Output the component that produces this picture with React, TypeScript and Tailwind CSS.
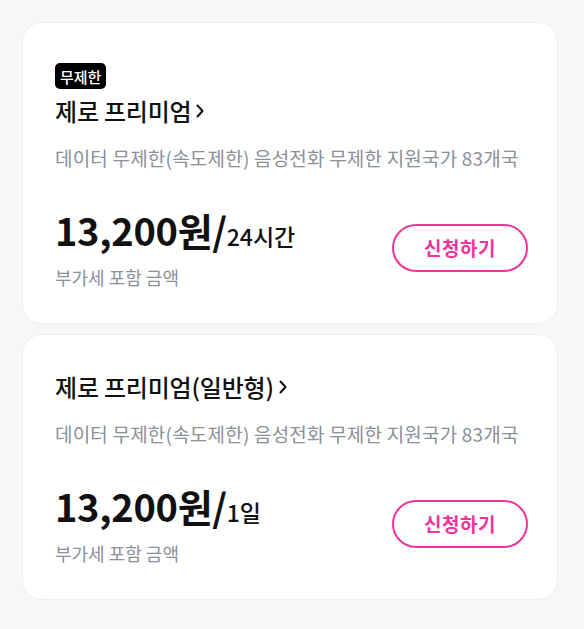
const font = { fontFamily: '"Noto Sans CJK KR", "Noto Sans", sans-serif' };

function Chevron() {
  return (
    <svg width="10" height="16" viewBox="0 0 10 16" fill="none" className="ml-1">
      <path d="M2.5 2.5l5 5.5-5 5.5" stroke="#111" strokeWidth="2" strokeLinecap="round" strokeLinejoin="round" />
    </svg>
  );
}

type Plan = {
  badge?: string;
  title: string;
  desc: string;
  price: string;
  unit: string;
};

const plans: Plan[] = [
  {
    badge: '무제한',
    title: '제로 프리미엄',
    desc: '데이터 무제한(속도제한) 음성전화 무제한 지원국가 83개국',
    price: '13,200원/',
    unit: '24시간',
  },
  {
    title: '제로 프리미엄(일반형)',
    desc: '데이터 무제한(속도제한) 음성전화 무제한 지원국가 83개국',
    price: '13,200원/',
    unit: '1일',
  },
];

function PlanCard({ plan }: { plan: Plan }) {
  return (
    <div className="bg-white rounded-[20px] border border-[#efefef] pl-8 pr-[29px] pt-10 pb-[35px]">
      {plan.badge && (
        <div className="mb-2.5 flex">
          <span className="inline-flex items-center h-[26px] px-[5px] rounded-[5px] bg-black text-white text-[15px] font-medium leading-none">
            {plan.badge}
          </span>
        </div>
      )}
      <div className="flex items-center h-6">
        <span className="text-[24px] leading-6 font-medium text-[#111] tracking-[-0.2px]">{plan.title}</span>
        <Chevron />
      </div>
      <p className="mt-[23px] text-[19px] leading-6 text-[#8b9099] tracking-[0.2px] whitespace-nowrap">{plan.desc}</p>
      <div className="mt-[38px] flex items-center justify-between">
        <div>
          <div className="flex items-baseline h-11 leading-[44px]">
            <span className="text-[38px] font-bold text-[#111] tracking-[-0.3px]">{plan.price}</span>
            <span className="text-[23px] font-medium text-[#111]">{plan.unit}</span>
          </div>
          <p className="mt-3.5 text-[18px] leading-[22px] text-[#8b9099]">부가세 포함 금액</p>
        </div>
        <button className="h-12 w-[136px] rounded-full border-2 border-[#f0359a] text-[#f0359a] text-[19px] font-bold tracking-[0.5px]">
          신청하기
        </button>
      </div>
    </div>
  );
}

export default function App() {
  return (
    <div className="min-h-[629px] bg-[#f7f7f7] pl-[22px] pr-[26px] pt-[22px] pb-8 flex flex-col gap-[10px]" style={font}>
      {plans.map((p) => (
        <PlanCard key={p.unit} plan={p} />
      ))}
    </div>
  );
}
